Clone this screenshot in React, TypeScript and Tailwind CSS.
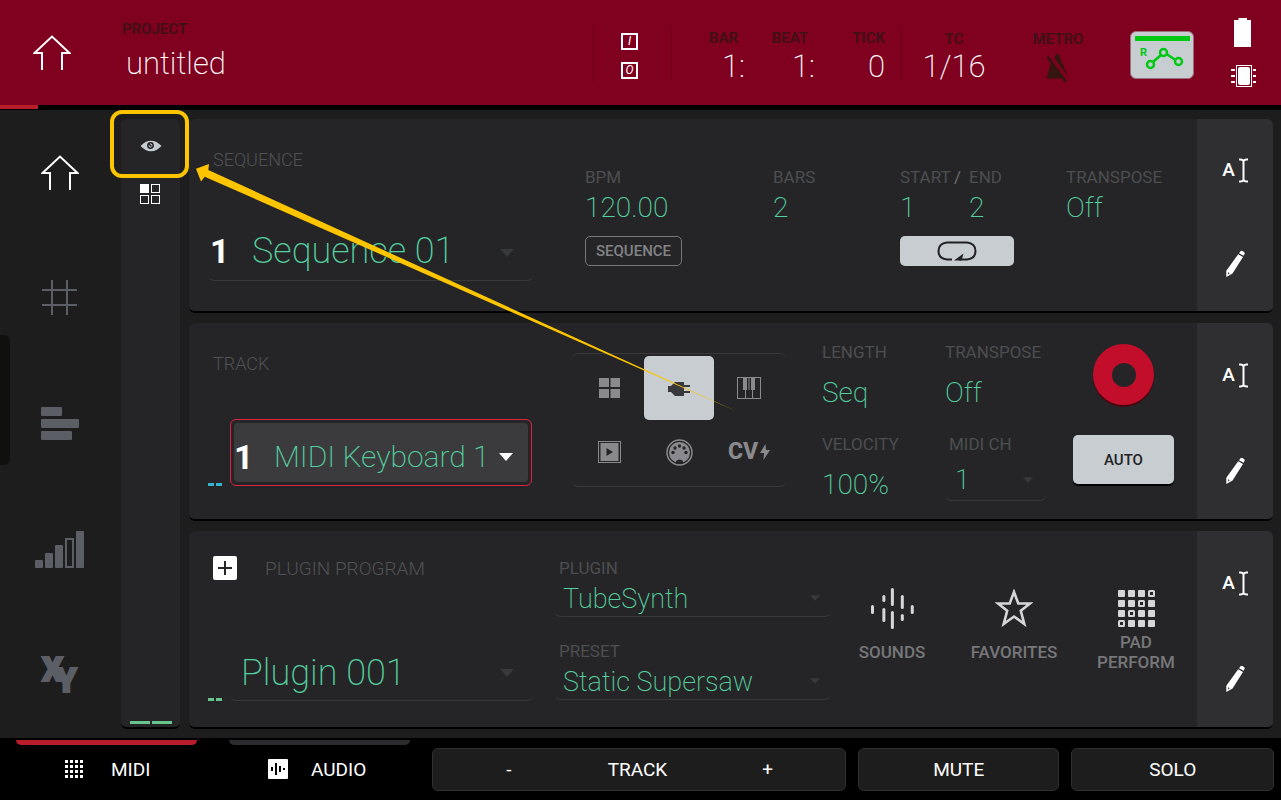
import type { ReactNode } from "react";

function HomeIcon() {
  return (
    <svg width="38" height="36" viewBox="0 0 38 36" fill="none" stroke="white" strokeWidth="2">
      <path d="M9 35V18H1.500L19 1.500L36.500 18H29V35" />
    </svg>
  );
}

function HashIcon() {
  return (
    <svg width="36" height="36" viewBox="0 0 36 36" fill="none" stroke="#5c5e66" strokeWidth="2">
      <path d="M10 0V35M25 0V35M0 10H35M0 25H35" />
    </svg>
  );
}

function BarsIcon() {
  return (
    <svg width="38" height="34" viewBox="0 0 38 34" fill="#5c5e66">
      <rect width="21" height="9" rx="1" />
      <rect y="12" width="38" height="9" rx="1" />
      <rect y="24" width="31" height="9" rx="1" />
    </svg>
  );
}

function LevelsIcon() {
  return (
    <svg width="50" height="38" viewBox="0 0 50 38" fill="#5c5e66">
      <rect y="29" width="8" height="8" rx="1" />
      <rect x="10" y="22" width="8" height="15" rx="1" />
      <rect x="20" y="14" width="8" height="23" rx="1" />
      <rect x="31" y="8" width="7" height="28" fill="none" stroke="#5c5e66" strokeWidth="2" />
      <rect x="41" width="8" height="37" rx="1" />
    </svg>
  );
}

function XYIcon() {
  return (
    <svg
      className="overflow-visible"
      width="40"
      height="38"
      viewBox="0 0 40 38"
      fill="#5c5e66"
      stroke="#5c5e66"
      strokeWidth="2"
      fontFamily="Roboto, sans-serif"
      fontWeight="900"
      fontSize="33"
    >
      <text x="2" y="25">
        X<tspan dx="-7" dy="11">Y</tspan>
      </text>
    </svg>
  );
}

function EyeIcon() {
  return (
    <svg width="22" height="12" viewBox="0 0 22 12">
      <path d="M0.500 6C4 2.500 7 0.800 11 0.800S18 2.500 21.500 6C18 9.500 15 11.200 11 11.200S4 9.500 0.500 6Z" fill="#c7cdd1" />
      <circle cx="10.500" cy="5.500" r="2.700" fill="#c7cdd1" stroke="#242427" strokeWidth="1.500" />
      <path d="M8.500 3.500L11.500 6.500" stroke="#242427" strokeWidth="1.500" />
    </svg>
  );
}

function SquaresIcon() {
  return (
    <svg width="21" height="20" viewBox="0 0 21 20" fill="none" stroke="white">
      <rect x="0.500" y="0.500" width="8" height="8" fill="white" />
      <rect x="11.500" y="0.500" width="8" height="8" />
      <rect x="0.500" y="11.500" width="8" height="8" />
      <rect x="11.500" y="11.500" width="8" height="8" />
    </svg>
  );
}

function PencilIcon() {
  return (
    <svg width="20" height="28" viewBox="0 0 20 28" fill="white">
      <path d="M13.200 4.300L18 7L7.500 23.500L1.300 27V20.800ZM2.800 24.500L4.600 23.400L3.300 22Z" fillRule="evenodd" />
      <path d="M14 3.200L15.500 1.200Q16.500 0.300 17.500 0.900L19.300 2.200Q20 3.100 19.500 4L18.600 5.800Z" />
    </svg>
  );
}

function Caret({ bright, small }: { bright?: boolean; small?: boolean }) {
  return (
    <svg
      className="pointer-events-none shrink-0"
      width={small ? 10 : 14}
      height={small ? 6 : 8}
      viewBox="0 0 14 8"
      fill={bright ? "white" : "#38393b"}
    >
      <path d="M0 0H14L7 8Z" />
    </svg>
  );
}

function SideTools({ subject }: { subject: string }) {
  return (
    <div className="flex w-[76px] shrink-0 flex-col bg-[#2f2f32] pt-1">
      <button aria-label={"Rename " + subject} className="flex flex-1 items-center justify-center gap-1 text-[19px] font-medium text-white">
        <span className="leading-6">A</span>
        <svg width="9" height="25" viewBox="0 0 9 25" fill="none" stroke="white" strokeWidth="2">
          <path d="M0 1.500Q3.500 1 4.500 3Q5.500 1 9 1.500M4.500 2.500V22.500M0 23.500Q3.500 24 4.500 22Q5.500 24 9 23.500" />
        </svg>
      </button>
      <button aria-label={"Edit " + subject} className="flex flex-1 items-center justify-center">
        <PencilIcon />
      </button>
    </div>
  );
}

function Panel({ subject, children }: { subject: string; children: ReactNode }) {
  return (
    <section className="flex overflow-hidden rounded-md border-b-2 border-black bg-[#252527]">
      {children}
      <SideTools subject={subject} />
    </section>
  );
}

function Field({ label, children }: { label: string; children: ReactNode }) {
  return (
    <div>
      <div className="text-[17px] leading-6 text-[#4c4e50]">{label}</div>
      <div className="text-[28px] leading-[38px] font-extralight text-[#54cf9f]">{children}</div>
    </div>
  );
}

function PluginSelect({ id, label, value }: { id: string; label: string; value: string }) {
  return (
    <div>
      <label htmlFor={id} className="block pl-1 text-[17px] leading-6 text-[#4c4e50]">
        {label}
      </label>
      <div className="flex h-[37px] items-center rounded-b-md border-b border-[#39393b] pr-[11px] pl-2">
        <select id={id} className="min-w-0 flex-1 appearance-none bg-transparent pt-0.5 text-[27px] leading-9 font-extralight text-[#54cf9f]">
          <option>{value}</option>
        </select>
        <Caret small />
      </div>
    </div>
  );
}

function Header() {
  return (
    <header className="flex h-[105px] shrink-0 bg-[#800020]">
      <a href="#home" aria-label="Home" className="flex w-[122px] shrink-0 items-center pl-[33px]">
        <HomeIcon />
      </a>
      <div className="min-w-0 flex-1 pt-[19px]">
        <div className="text-[15px] leading-5 font-semibold text-[#3f1015]">PROJECT</div>
        <div className="mt-[5px] pl-1 text-[31px] leading-10 font-extralight text-white">untitled</div>
      </div>
      <div className="mt-[27px] flex h-[55px] w-[79px] flex-col items-center justify-center gap-3 border-x border-[#6c001d] pt-0.5 pr-[6px] text-[12px] leading-3 text-white italic">
        <span className="flex h-[17px] w-[17px] items-center justify-center border-2 border-white">I</span>
        <span className="flex h-[17px] w-[17px] items-center justify-center border-2 border-white">O</span>
      </div>
      <div className="mt-[27px] grid h-[55px] w-[230px] grid-cols-[73px_70px_70px] grid-rows-[20px_36px] border-r border-[#6c001d] text-right">
        <span className="pr-[7px] text-[15px] leading-[22px] font-semibold text-[#3f1015]">BAR</span>
        <span className="pr-[7px] text-[15px] leading-[22px] font-semibold text-[#3f1015]">BEAT</span>
        <span className="text-[15px] leading-[22px] font-semibold text-[#3f1015]">TICK</span>
        <span className="text-[31px] leading-10 font-extralight text-white">1:</span>
        <span className="text-[31px] leading-10 font-extralight text-white">1:</span>
        <span className="text-[31px] leading-10 font-extralight text-white">0</span>
      </div>
      <div className="flex w-[104px] flex-col items-center pt-[29px]">
        <span className="text-[15px] leading-5 font-semibold text-[#3f1015]">TC</span>
        <span className="text-[31px] leading-9 font-extralight text-white">1/16</span>
      </div>
      <button aria-label="Metronome" className="flex w-[104px] flex-col items-center pt-[29px]">
        <span className="text-[15px] leading-5 font-semibold text-[#3f1015]">METRO</span>
        <svg className="mt-1" width="24" height="30" viewBox="0 0 24 30" fill="#34150f">
          <path d="M8.500 5.500Q9 2 11 0.500Q13.500 1 14 5L16 9.500L22 23L21 22Z" />
          <path d="M5 10L18.500 25.500H0.500Z" />
          <path d="M0.500 4.500L2.500 3L21 28L18.500 29.500Z" />
        </svg>
      </button>
      <button aria-label="Automation read" className="mt-[31px] mr-[36px] ml-[20px] h-12 w-16 rounded-md border border-[#9f6f7e] bg-[#c7cdd1]">
        <svg width="62" height="46" viewBox="0 0 62 46" fill="none" stroke="#00c914" strokeWidth="2.500">
          <rect x="4" y="4" width="55" height="5" fill="#00c914" stroke="none" />
          <text x="9" y="24" fontSize="11" fontWeight="700" fontFamily="Roboto, sans-serif" fill="#00c914" stroke="none">R</text>
          <path d="M22 30L30 23M35.500 22L44.500 28" />
          <circle cx="19.500" cy="32.500" r="3.500" />
          <circle cx="32.500" cy="20.500" r="3.500" />
          <circle cx="47.500" cy="29.500" r="3.500" />
        </svg>
      </button>
      <div className="flex w-[26px] flex-col items-center gap-[18px] pt-[18px]">
        <svg width="18" height="29" viewBox="0 0 18 29" fill="white" aria-label="Battery">
          <path d="M4.500 0H13V2H17V29H0V2H4.500Z" />
        </svg>
        <svg width="25" height="22" viewBox="0 0 25 22" fill="white" aria-label="CPU">
          <path d="M0 4H4V6H0ZM0 10H4V12H0ZM0 16H4V18H0ZM22 4H25V6H22ZM22 10H25V12H22ZM22 16H25V18H22Z" />
          <rect x="5.500" y="0.500" width="15" height="21" fill="none" stroke="white" />
          <rect x="7" y="2" width="12" height="18" rx="2" />
        </svg>
      </div>
      <div className="w-[25px]" />
    </header>
  );
}

const navItems = [
  { name: "Main", icon: <HomeIcon /> },
  { name: "Grid", icon: <HashIcon /> },
  { name: "Arrange", icon: <BarsIcon /> },
  { name: "Mixer", icon: <LevelsIcon /> },
  { name: "XY pad", icon: <XYIcon /> },
];

function SequencePanel() {
  return (
    <Panel subject="sequence">
      <div className="grid flex-1 grid-cols-[396fr_188fr_127fr_166fr_131fr]">
        <div className="flex min-w-0 flex-col pt-[29px] pb-[30px]">
          <label htmlFor="sequence" className="pl-6 text-[18px] leading-6 font-light text-[#505254]">SEQUENCE</label>
          <div className="mt-auto mr-[52px] ml-[19px] flex h-14 items-center rounded-b-md border-b border-[#39393b] pr-[19px]">
            <span className="w-11 pb-1 pl-[2px] text-[34px] leading-10 font-bold text-white">1</span>
            <select id="sequence" className="min-w-0 flex-1 appearance-none bg-transparent pb-1 text-[36px] leading-[48px] font-extralight text-[#54cf9f]">
              <option>Sequence 01</option>
            </select>
            <Caret />
          </div>
        </div>
        <div className="pt-[46px]">
          <Field label="BPM">120.00</Field>
          <button className="mt-[9px] h-[30px] w-[97px] rounded-[5px] border border-[#77777a] text-[15px] leading-5 font-medium text-[#838386]">
            SEQUENCE
          </button>
        </div>
        <div className="pt-[46px]">
          <Field label="BARS">2</Field>
        </div>
        <div className="pt-[46px]">
          <div className="flex">
            <div className="w-[54px]">
              <Field label="START">1</Field>
            </div>
            <div className="w-[15px] text-[17px] leading-6 text-[#6c6e70]">/</div>
            <Field label="END">2</Field>
          </div>
          <button aria-label="Loop" className="mt-[9px] flex h-[30px] w-[114px] items-center justify-center rounded-[5px] bg-[#c7cdd1]">
            <svg width="40" height="20" viewBox="0 0 40 20" fill="none" stroke="#222224" strokeWidth="2">
              <path d="M15 18.500H10Q1.500 17.500 1.500 10T10 1.500H30Q38.500 2.500 38.500 10T30 18.500H22" />
              <path d="M17 19.500L26.500 12.500L24.500 19.500Z" fill="#222224" stroke="none" />
            </svg>
          </button>
        </div>
        <div className="pt-[46px]">
          <Field label="TRANSPOSE">Off</Field>
        </div>
      </div>
    </Panel>
  );
}

const trackTypes = [
  {
    name: "Drum",
    icon: (
      <svg width="21" height="20" viewBox="0 0 21 20" fill="#8a8a8e">
        <path d="M0 0H10V9H0ZM11.500 0H21V9H11.500ZM0 11H10V20H0ZM11.500 11H21V20H11.500Z" />
      </svg>
    ),
  },
  {
    name: "Plugin",
    icon: (
      <svg width="23" height="15" viewBox="0 0 23 15" fill="#39393b">
        <path d="M0 5H3L7 1H16V4H22V6H16V10H22V12H16V15H7L3 11H0Z" />
      </svg>
    ),
  },
  {
    name: "Keygroup",
    icon: (
      <svg width="24" height="22" viewBox="0 0 24 22" fill="none" stroke="#8a8a8e">
        <rect x="0.500" y="0.500" width="23" height="21" />
        <path d="M8.500 13V22M15.500 13V22" />
        <path d="M6 1H10V13H6ZM14 1H18V13H14Z" fill="#8a8a8e" stroke="none" />
        <path d="M12 1V13" strokeWidth="1" />
      </svg>
    ),
  },
  {
    name: "Clip",
    icon: (
      <svg width="23" height="22" viewBox="0 0 23 22">
        <rect x="0.500" y="0.500" width="22" height="21" fill="none" stroke="#8a8a8e" />
        <rect x="2.500" y="2" width="18" height="18" fill="#8a8a8e" />
        <path d="M8.500 7L15 11L8.500 15Z" fill="#252527" />
      </svg>
    ),
  },
  {
    name: "MIDI",
    icon: (
      <svg width="27" height="27" viewBox="0 0 27 27">
        <circle cx="13.500" cy="13.500" r="12.500" fill="none" stroke="#8a8a8e" strokeWidth="1.500" />
        <circle cx="13.500" cy="13.500" r="10.500" fill="#8a8a8e" />
        <g fill="#252527">
          <circle cx="7" cy="13.500" r="1.700" />
          <circle cx="9" cy="9" r="1.700" />
          <circle cx="13.500" cy="7" r="1.700" />
          <circle cx="18" cy="9" r="1.700" />
          <circle cx="20" cy="13.500" r="1.700" />
          <path d="M10 25V22Q13.500 19 17 22V25Z" />
        </g>
      </svg>
    ),
  },
  {
    name: "CV",
    icon: (
      <span className="flex items-center text-[23px] leading-6 font-extrabold text-[#8a8a8e]">
        CV
        <svg className="ml-[2px]" width="10" height="16" viewBox="0 0 10 16" fill="#8a8a8e">
          <path d="M5.500 0L0 9H4L3.500 16L10 6H6Z" />
        </svg>
      </span>
    ),
  },
];

function TrackPanel() {
  return (
    <Panel subject="track">
      <div className="grid flex-1 grid-cols-[383fr_250fr_123fr_128fr_124fr]">
        <div className="flex min-w-0 flex-col pt-[29px] pb-[33px]">
          <label htmlFor="track" className="pl-6 text-[18px] leading-6 font-light text-[#505254]">TRACK</label>
          <div className="mt-auto mr-[40px] ml-[19px] flex items-end">
            <div className="flex w-[22px] shrink-0 gap-[2px]">
              <span className="h-[3px] w-[6px] bg-[#35b2d0]" />
              <span className="h-[3px] w-[6px] bg-[#35b2d0]" />
            </div>
            <div className="min-w-0 flex-1 rounded-md border border-[#df2344] p-[3px]">
              <div className="flex h-[59px] items-center rounded-[4px] bg-[#3b3b3d] pt-2 pr-[15px]">
                <span className="w-10 shrink-0 text-[34px] leading-10 font-bold text-white">1</span>
                <select id="track" className="w-0 min-w-0 flex-1 appearance-none bg-transparent text-[30px] leading-[46px] font-extralight text-[#54cf9f]">
                  <option>MIDI Keyboard 1</option>
                </select>
                <Caret bright />
              </div>
            </div>
          </div>
        </div>
        <div className="min-w-0 pt-[30px] pr-9">
          <div className="grid h-[134px] grid-cols-3 grid-rows-2 rounded-md border-y border-[#39393b] p-[2px]">
            {trackTypes.map((type) => (
              <button
                key={type.name}
                aria-label={type.name}
                className={
                  type.name === "Plugin"
                    ? "flex items-center justify-center rounded-[5px] bg-[#c7cdd1]"
                    : "flex items-center justify-center"
                }
              >
                {type.icon}
              </button>
            ))}
          </div>
        </div>
        <div className="flex min-w-0 flex-col gap-[20px] pt-[17px]">
          <div>
            <div className="text-[17px] leading-6 text-[#4c4e50]">LENGTH</div>
            <div className="mt-[10px] text-[28px] leading-[38px] font-extralight text-[#54cf9f]">Seq</div>
          </div>
          <div>
            <div className="text-[17px] leading-6 text-[#4c4e50]">VELOCITY</div>
            <div className="mt-[10px] text-[28px] leading-[38px] font-extralight text-[#54cf9f]">100%</div>
          </div>
        </div>
        <div className="flex min-w-0 flex-col gap-[20px] pt-[17px]">
          <div>
            <div className="text-[17px] leading-6 text-[#4c4e50]">TRANSPOSE</div>
            <div className="mt-[10px] text-[28px] leading-[38px] font-extralight text-[#54cf9f]">Off</div>
          </div>
          <div className="w-[101px]">
            <label htmlFor="midi-channel" className="block pl-1 text-[17px] leading-6 text-[#4c4e50]">MIDI CH</label>
            <div className="mt-1 flex h-[41px] items-center rounded-b-md border-b border-[#39393b] pr-[13px] pl-[10px]">
              <select id="midi-channel" className="w-0 min-w-0 flex-1 appearance-none bg-transparent text-[27px] leading-9 font-extralight text-[#54cf9f]">
                <option>1</option>
              </select>
              <Caret small />
            </div>
          </div>
        </div>
        <div className="flex w-[101px] flex-col items-center pt-[21px]">
          <button aria-label="Record arm" className="flex h-[61px] w-[61px] items-center justify-center rounded-full bg-[#c20e2b] shadow-[0_2px_0_#4a0610]">
            <span className="h-6 w-6 rounded-full bg-[#252527]" />
          </button>
          <button className="mt-[30px] h-[49px] w-full rounded-[5px] bg-[#c7cdd1] text-[15px] leading-5 font-medium text-[#222224] shadow-[0_2px_0_#000]">
            AUTO
          </button>
        </div>
      </div>
    </Panel>
  );
}

const soundBars = [
  [0, 17, 9],
  [8, 7, 7],
  [8, 20, 14],
  [14, 0, 18],
  [14, 23, 18],
  [21, 7, 14],
  [21, 26, 7],
  [28, 17, 9],
];

function SoundsIcon() {
  return (
    <svg width="43" height="41" viewBox="0 0 43 41" fill="#d6d6d8">
      {soundBars.map(([x, y, h], i) => (
        <rect key={i} x={x * 1.42} y={y} width="3" height={h} rx="1.500" />
      ))}
    </svg>
  );
}

function StarIcon() {
  return (
    <svg width="38" height="38" viewBox="0 0 38 38" fill="none" stroke="#d6d6d8" strokeWidth="2.600">
      <path d="M19 3L23.300 14.500H35L25.800 21.800L29.300 35L19 27.500L8.700 35L12.200 21.800L3 14.500H14.700Z" />
    </svg>
  );
}

function PadsIcon() {
  return (
    <svg width="37" height="38" viewBox="0 0 37 38" fill="#d6d6d8">
      {[0, 1, 2, 3].map((row) =>
        [0, 1, 2, 3].map((col) =>
          row + col === 3 ? (
            <rect key={row + "-" + col} x={col * 10 + 1} y={row * 10 + 1} width="5" height="5" rx="0.500" fill="none" stroke="#d6d6d8" strokeWidth="2" />
          ) : (
            <rect key={row + "-" + col} x={col * 10} y={row * 10} width="7" height="7" rx="1" />
          ),
        ),
      )}
    </svg>
  );
}

function ProgramPanel() {
  return (
    <Panel subject="program">
      <div className="grid flex-1 grid-cols-[366fr_276fr_122fr_122fr_122fr]">
        <div className="flex min-w-0 flex-col pt-6 pb-[26px]">
          <div className="flex items-center pl-6">
            <button aria-label="Add program" className="mr-7 flex h-6 w-6 items-center justify-center rounded-[2px] bg-white">
              <svg width="14" height="14" viewBox="0 0 14 14" stroke="#252527" strokeWidth="2">
                <path d="M7 0V14M0 7H14" />
              </svg>
            </button>
            <label htmlFor="program" className="pt-0.5 text-[19px] leading-6 font-light text-[#505254]">PLUGIN PROGRAM</label>
          </div>
          <div className="mt-auto mr-[22px] ml-[19px] flex items-end">
            <div className="flex w-[22px] shrink-0 gap-[2px]">
              <span className="h-[3px] w-[6px] bg-[#67c48d]" />
              <span className="h-[3px] w-[6px] bg-[#67c48d]" />
            </div>
            <div className="flex h-14 min-w-0 flex-1 items-center rounded-b-md border-b border-[#39393b] pr-[19px] pl-[11px]">
              <select id="program" className="min-w-0 flex-1 appearance-none bg-transparent text-[36px] leading-[48px] font-extralight text-[#54cf9f]">
                <option>Plugin 001</option>
              </select>
              <Caret />
            </div>
          </div>
        </div>
        <div className="flex min-w-0 flex-col gap-[22px] pt-[25px]">
          <PluginSelect id="plugin" label="PLUGIN" value="TubeSynth" />
          <PluginSelect id="preset" label="PRESET" value="Static Supersaw" />
        </div>
        <button className="flex flex-col items-center pt-[57px] text-[17px] leading-5 font-medium text-[#77777a]">
          <SoundsIcon />
          <span className="mt-[13px]">SOUNDS</span>
        </button>
        <button className="flex flex-col items-center pt-[58px] text-[17px] leading-5 font-medium text-[#77777a]">
          <StarIcon />
          <span className="mt-[15px]">FAVORITES</span>
        </button>
        <button className="flex flex-col items-center pt-[59px] text-[17px] leading-5 font-medium text-[#77777a]">
          <PadsIcon />
          <span className="mt-1">
            PAD
            <br />
            PERFORM
          </span>
        </button>
      </div>
    </Panel>
  );
}

function Footer() {
  return (
    <footer className="flex h-[62px] shrink-0 bg-black pr-[7px] pl-4 text-[19px] leading-6 text-white">
      <button className="relative mr-8 flex w-[181px] items-center pl-12">
        <span className="absolute inset-x-0 top-[2px] h-[5px] rounded-b-md bg-[#b91c2b]" />
        <svg width="19" height="18" viewBox="0 0 19 18" stroke="white" strokeWidth="3" strokeDasharray="3 2">
          <path d="M1 1.500H19M1 6.500H19M1 11.500H19M1 16.500H19" />
        </svg>
        <span className="ml-7 pt-0.5">MIDI</span>
      </button>
      <button className="relative mr-[22px] flex w-[181px] items-center pl-[39px]">
        <span className="absolute inset-x-0 top-[2px] h-[5px] rounded-b-md bg-[#2c2c2f]" />
        <svg width="20" height="20" viewBox="0 0 20 20">
          <rect width="20" height="20" rx="1" fill="white" />
          <path d="M4 8V12M8 4V16M12 7V13M16 9V11" stroke="black" strokeWidth="2" />
        </svg>
        <span className="ml-[23px] pt-0.5">AUDIO</span>
      </button>
      <div className="mt-[10px] grid h-[43px] flex-[415] grid-cols-[153fr_106fr_156fr] items-center rounded-md border border-[#303032] bg-[#1d1d1e]">
        <button aria-label="Previous track">-</button>
        <span className="text-center">TRACK</span>
        <button aria-label="Next track">+</button>
      </div>
      <button className="mt-[10px] ml-3 h-[43px] flex-[201] rounded-md border border-[#303032] bg-[#1d1d1e]">MUTE</button>
      <button className="mt-[10px] ml-3 h-[43px] flex-[202] rounded-md border border-[#303032] bg-[#1d1d1e]">SOLO</button>
    </footer>
  );
}

export default function App() {
  return (
    <div className="relative flex min-h-screen flex-col bg-[#1d1d1e] font-[Roboto,sans-serif]">
      <Header />
      <div className="h-[5px] shrink-0 bg-black">
        <div className="h-1 w-[38px] bg-[#b91c2b]" />
      </div>
      <div className="relative flex flex-1">
        <nav className="flex w-[121px] shrink-0 flex-col pr-0.5">
          {navItems.map((item) => (
            <a key={item.name} href={"#" + item.name} aria-label={item.name} className="flex flex-1 items-center justify-center">
              {item.icon}
            </a>
          ))}
        </nav>
        <button aria-label="Open drawer" className="absolute top-[225px] left-0 h-[130px] w-[10px] rounded-r-md bg-[#10100f]" />
        <main className="flex flex-1 gap-[9px] pt-[9px] pr-2 pb-[9px]">
          <aside className="flex w-[59px] shrink-0 flex-col items-center rounded-md border-b-2 border-black bg-[#252528]">
            <button aria-label="Show track view" className="relative flex h-[54px] w-full items-center justify-center">
              <EyeIcon />
              <span className="pointer-events-none absolute -top-[9px] -right-[9px] -left-[11px] h-[68px] rounded-xl border-4 border-[#fdc400]" />
            </button>
            <button aria-label="Grid view" className="mt-[11px]">
              <SquaresIcon />
            </button>
            <div className="mt-auto flex gap-[2px] pb-[3px]">
              <span className="h-[3px] w-5 bg-[#67c48d]" />
              <span className="h-[3px] w-5 bg-[#67c48d]" />
            </div>
          </aside>
          <div className="grid min-w-0 flex-1 grid-rows-[194fr_198fr_198fr] gap-[10px]">
            <SequencePanel />
            <TrackPanel />
            <ProgramPanel />
          </div>
        </main>
      </div>
      <Footer />
      <svg className="pointer-events-none absolute top-[160px] left-[190px]" width="552" height="256" viewBox="190 160 552 256" fill="#fdc400">
        <path d="M196 168.700L209 164L208.300 170L738 412L204.700 176.700L201 181.500Z" />
      </svg>
    </div>
  );
}
